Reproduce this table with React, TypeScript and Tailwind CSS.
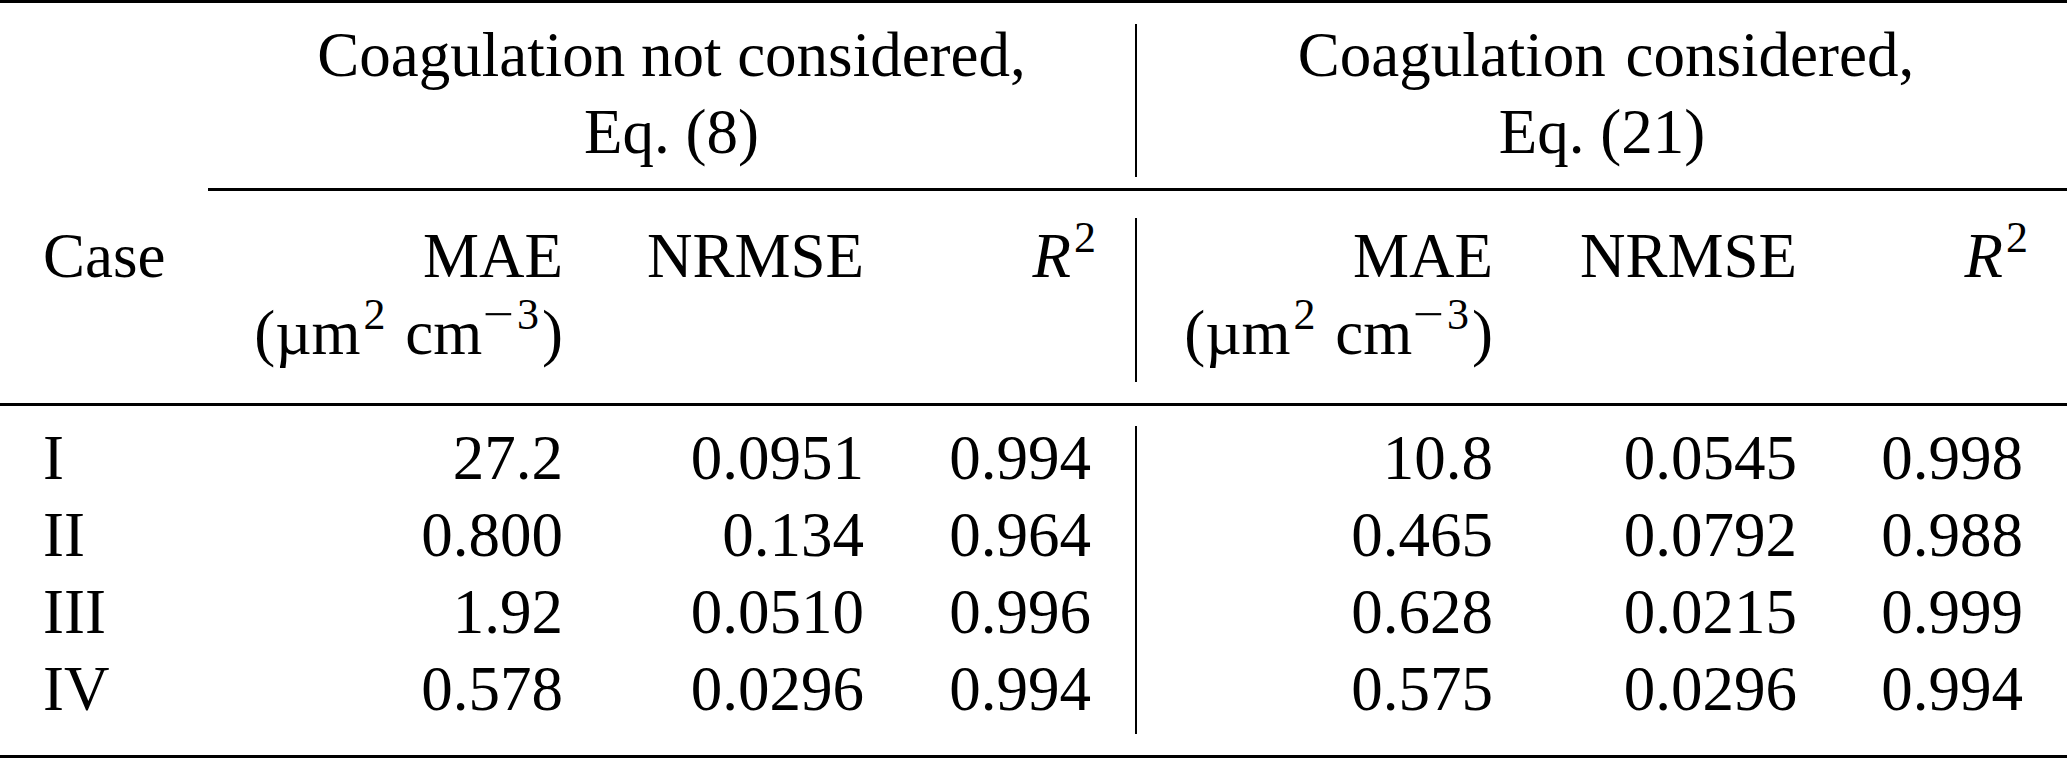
const cols = 'grid grid-cols-[208px_398px_301px_228px_2px_398px_304px_228px]'

const rows = [
  ['I', '27.2', '0.0951', '0.994', '10.8', '0.0545', '0.998'],
  ['II', '0.800', '0.134', '0.964', '0.465', '0.0792', '0.988'],
  ['III', '1.92', '0.0510', '0.996', '0.628', '0.0215', '0.999'],
  ['IV', '0.578', '0.0296', '0.994', '0.575', '0.0296', '0.994'],
]

function Unit() {
  return (
    <span>
      (µm<sup className="text-[44px] -top-[25px] ml-[3px] mr-[4px]">2</sup> cm
      <sup className="text-[44px] -top-[25px] ml-[4px] mr-[3px]">
        <span className="inline-block scale-x-125 mr-[6px]">−</span>3
      </sup>
      )
    </span>
  )
}

function R2() {
  return (
    <span className="-mr-[5px]">
      <i>R</i>
      <sup className="text-[44px] -top-[25px] ml-[3px]">2</sup>
    </span>
  )
}

export default function App() {
  return (
    <div className="w-[2067px] h-[759px] bg-white text-black font-['Liberation_Serif','Times_New_Roman',serif] text-[63px] leading-[77px]">
      {/* top rule */}
      <div className="h-[3px] bg-black" />

      {/* group headers */}
      <div className={`${cols} pt-[14px] pb-[17px]`}>
        <div />
        <div className="col-span-3 text-center">
          <div>Coagulation not considered,</div>
          <div>Eq. (8)</div>
        </div>
        <div className="bg-black mt-[7px] -mb-[6px]" />
        <div className="col-span-3 text-center">
          <div className="pl-[8px] [word-spacing:4px]">Coagulation considered,</div>
          <div>Eq. (21)</div>
        </div>
      </div>

      <div className="h-[3px] ml-[208px] bg-black" />

      {/* column headers */}
      <div className={`${cols} pt-[27px] pb-[31px]`}>
        <div className="pl-[43px]">Case</div>
        <div className="text-right pr-[43px]">
          <div>MAE</div>
          <Unit />
        </div>
        <div className="text-right pr-[43px]">NRMSE</div>
        <div className="text-right pr-[44px]">
          <R2 />
        </div>
        <div className="bg-black -mb-[10px]" />
        <div className="text-right pr-[42px]">
          <div>MAE</div>
          <Unit />
        </div>
        <div className="text-right pr-[42px]">NRMSE</div>
        <div className="text-right pr-[44px]">
          <R2 />
        </div>
      </div>

      <div className="h-[3px] bg-black" />

      {/* data */}
      <div className={`${cols} pt-[14px] pb-[27px]`}>
        <div className="col-start-5 row-start-1 row-span-4 bg-black mt-[6px] -mb-[6px]" />
        {rows.map((r) => (
          <div key={r[0]} className="contents">
            <div className="col-start-1 pl-[43px]">{r[0]}</div>
            <div className="col-start-2 text-right pr-[43px]">{r[1]}</div>
            <div className="col-start-3 text-right pr-[43px]">{r[2]}</div>
            <div className="col-start-4 text-right pr-[44px]">{r[3]}</div>
            <div className="col-start-6 text-right pr-[42px]">{r[4]}</div>
            <div className="col-start-7 text-right pr-[42px]">{r[5]}</div>
            <div className="col-start-8 text-right pr-[44px]">{r[6]}</div>
          </div>
        ))}
      </div>

      {/* bottom rule */}
      <div className="h-[3px] bg-black" />
    </div>
  )
}
